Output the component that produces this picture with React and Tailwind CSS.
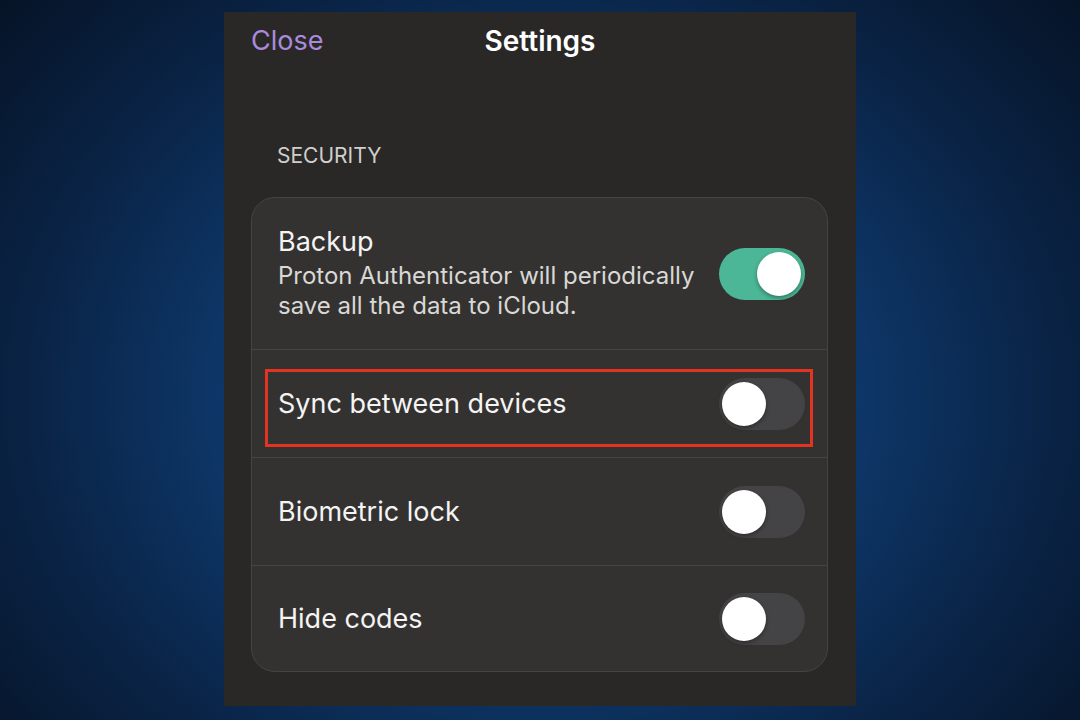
function Toggle({ on }) {
  return (
    <div
      className={`relative w-[86px] h-[52px] rounded-full shrink-0 ${
        on ? 'bg-[#4bb796]' : 'bg-[#444345]'
      }`}
    >
      <div
        className={`absolute top-[4px] w-[44px] h-[44px] rounded-full bg-white shadow-[0_2px_4px_rgba(0,0,0,0.35)] ${
          on ? 'left-[38px]' : 'left-[3px]'
        }`}
      />
    </div>
  )
}

function Row({ title, desc, on, last, highlight, height }) {
  return (
    <div
      className={`relative flex items-center justify-between pl-[26px] pr-[22px] ${height} ${
        last ? '' : 'border-b border-[#464544]'
      }`}
    >
      <div className="min-w-0">
        <div className="text-[27px] leading-[32px] text-[#f4f4f4]">{title}</div>
        {desc && (
          <div className="mt-[3px] text-[24px] leading-[30px] text-[#d9d8d6] w-[436px]">{desc}</div>
        )}
      </div>
      <Toggle on={on} />
      {highlight && (
        <div className="absolute left-[13px] right-[14px] top-[19px] bottom-[10px] border-[3px] border-[#e23420] pointer-events-none" />
      )}
    </div>
  )
}

export default function App() {
  return (
    <div
      className="w-full h-[720px] overflow-hidden bg-[radial-gradient(ellipse_75%_95%_at_50%_55%,#164f94_0%,#0e3a6e_35%,#0a2447_62%,#040c18_100%)] pt-[12px]"
      style={{ fontFamily: 'Inter, "Open Sans", Roboto, sans-serif' }}
    >
      <div className="mx-auto w-[632px] h-[694px] bg-[#2a2826] pt-[12px]">
        <div className="grid grid-cols-[1fr_auto_1fr] items-center px-[27px] h-[34px]">
          <span className="text-[27px] leading-[34px] text-[#a98bdd]">Close</span>
          <span className="text-[28px] leading-[34px] font-semibold text-white">Settings</span>
          <span />
        </div>
        <div className="mt-[86px] pl-[53px] text-[21px] leading-[24px] text-[#cfcfcd]">
          SECURITY
        </div>
        <div className="mt-[29px] ml-[27px] w-[577px] rounded-[24px] bg-[#333230] border border-[#454443] overflow-hidden">
          <Row
            title="Backup"
            desc="Proton Authenticator will periodically save all the data to iCloud."
            on
            height="h-[152px]"
          />
          <Row title="Sync between devices" highlight height="h-[108px]" />
          <Row title="Biometric lock" height="h-[108px]" />
          <Row title="Hide codes" last height="h-[105px]" />
        </div>
      </div>
    </div>
  )
}
